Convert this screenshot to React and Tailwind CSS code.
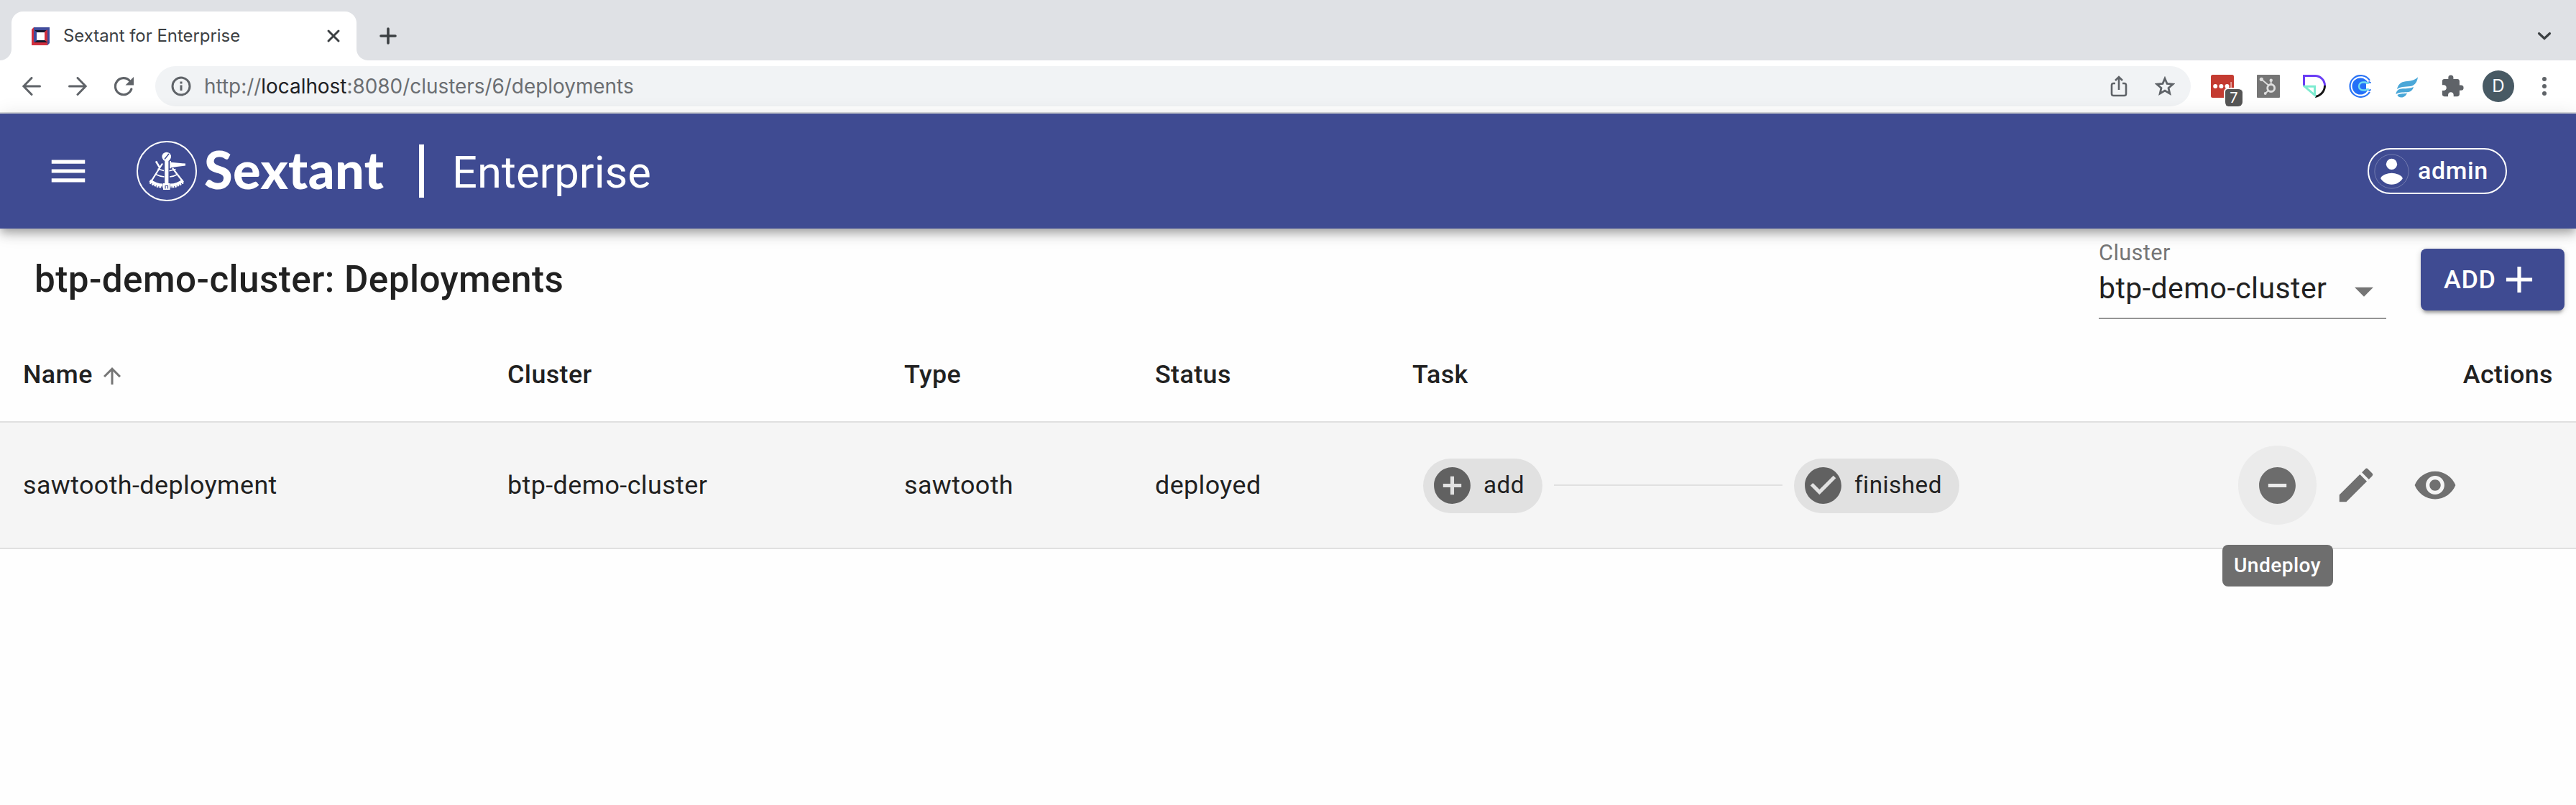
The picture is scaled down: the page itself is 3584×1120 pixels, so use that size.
import {
  MdAdd,
  MdAddCircle,
  MdArrowDropDown,
  MdArrowUpward,
  MdCheckCircle,
  MdEdit,
  MdExtension,
  MdMenu,
  MdRemoveCircle,
  MdVisibility,
} from "react-icons/md";

function Favicon() {
  return (
    <svg className="h-[25px] w-[25px]" viewBox="0 0 25 25">
      <path d="M0 3l3-3v22l-3 3z" fill="#d02f3e" />
      <path d="M3 0h22v22l-3 3V4H3z" fill="#3f4b9b" />
      <path d="M0 25V20h22v5z" fill="#d02f3e" />
      <path d="M4 4h18v17H4z" fill="#10162b" />
      <path d="M3 4l4 2v13l-4 2z" fill="#3f4b9b" />
      <path d="M22 3l-4 3v12l4 3z" fill="#d02f3e" />
      <path d="M7 7h11v11H7z" fill="#fff" />
    </svg>
  );
}

function Tab() {
  return (
    <div className="flex items-end">
      <div className="h-4 w-4 bg-white">
        <div className="h-4 w-4 rounded-br-2xl bg-[#dfe1e5]" />
      </div>
      <div className="flex h-[68px] w-[480px] items-center rounded-t-2xl bg-white pl-7 pr-6">
        <Favicon />
        <span className="ml-[19px] flex-1 whitespace-nowrap text-[23.9px] leading-8 text-[#3c4043]">
          Sextant for Enterprise
        </span>
        <svg className="h-4 w-4 overflow-visible" viewBox="0 0 16 16" fill="none" stroke="#3c4043" strokeWidth="3" strokeLinecap="round">
          <path d="M1 1l14 14M15 1L1 15" />
        </svg>
      </div>
      <div className="h-4 w-4 bg-white">
        <div className="h-4 w-4 rounded-bl-2xl bg-[#dfe1e5]" />
      </div>
    </div>
  );
}

function TabStrip() {
  return (
    <div className="flex h-[84px] items-end bg-[#dfe1e5]">
      <Tab />
      <div className="flex h-[68px] flex-1 items-center justify-between pl-4 pr-[35px]">
        <svg className="h-6 w-6" viewBox="0 0 24 24" fill="none" stroke="#3c4043" strokeWidth="3.6" strokeLinecap="round">
          <path d="M12 2v20M2 12h20" />
        </svg>
        <svg className="h-[12px] w-[18px] overflow-visible" viewBox="0 0 18 12" fill="none" stroke="#3c4043" strokeWidth="3.2" strokeLinecap="round">
          <path d="M1.5 2.5L9 9.500l7.500-7" />
        </svg>
      </div>
    </div>
  );
}

function Cell({ children }) {
  return <div className="flex h-14 w-16 shrink-0 items-center justify-center">{children}</div>;
}

function Toolbar() {
  return (
    <div className="flex h-[74px] items-center border-b-2 border-[#d9dbde] bg-white px-3">
      <Cell>
        <svg className="h-[26px] w-[26px]" viewBox="0 0 26 26" fill="none" stroke="#5f6368" strokeWidth="3" strokeLinecap="round">
          <path d="M24.500 13H2M13 1.500L1.800 13 13 24.500" />
        </svg>
      </Cell>
      <Cell>
        <svg className="h-[26px] w-[26px]" viewBox="0 0 26 26" fill="none" stroke="#5f6368" strokeWidth="3" strokeLinecap="round">
          <path d="M1.500 13H24M13 1.500L24.200 13 13 24.500" />
        </svg>
      </Cell>
      <Cell>
        <svg className="h-[27px] w-[27px]" viewBox="0 0 27 27" fill="none">
          <path d="M21.500 5.500A11.500 11.500 0 1 0 23.800 17" stroke="#5f6368" strokeWidth="3.200" strokeLinecap="round" />
          <path d="M27 0v11.500H15.500z" fill="#5f6368" />
        </svg>
      </Cell>
      <div className="mx-3 flex h-14 flex-1 items-center rounded-full bg-[#f1f3f5] pl-[22px] pr-1">
        <svg className="h-7 w-7" viewBox="0 0 28 28">
          <circle cx="14" cy="14" r="12" fill="none" stroke="#5f6368" strokeWidth="3" />
          <path d="M12.500 7.500h3v3h-3zM12.500 12.500h3V20h-3z" fill="#5f6368" />
        </svg>
        <span className="ml-[18px] flex-1 whitespace-nowrap text-[27.900px] leading-10 text-[#6b6e72]">
          http://<span className="text-[#202124]">localhost</span>:8080/clusters/6/deployments
        </span>
        <Cell>
          <svg className="h-[30px] w-[24px]" viewBox="0 0 24 30" fill="none" stroke="#5f6368" strokeWidth="2.600">
            <path d="M7 11H4.500A2.500 2.500 0 0 0 2 13.500v12A2.500 2.500 0 0 0 4.500 28h15a2.500 2.500 0 0 0 2.500-2.500v-12a2.500 2.500 0 0 0-2.500-2.500H17M12 20V3M7 7l5-5 5 5" />
          </svg>
        </Cell>
        <Cell>
          <svg className="h-7 w-7" viewBox="0 0 28 28" fill="none" stroke="#5f6368" strokeWidth="2.800">
            <path d="M14 3.200l3.100 7.300 7.900.7-6 5.200 1.800 7.800-6.800-4.100-6.800 4.100L9 16.400l-6-5.200 7.900-.7z" />
          </svg>
        </Cell>
      </div>
      <Cell>
        <div className="relative">
          <svg className="h-8 w-8" viewBox="0 0 32 32">
            <rect width="32" height="32" rx="2.500" fill="#c43b31" />
            <circle cx="6.200" cy="16" r="3" fill="#fff" />
            <circle cx="14.400" cy="16" r="3" fill="#fff" />
            <circle cx="22.500" cy="16" r="3" fill="#fff" />
            <path d="M27.500 10h1.200v12h-1.200z" fill="#f3d5d2" />
          </svg>
          <span className="absolute left-[18px] top-[18px] box-content flex h-6 w-6 items-center justify-center rounded-[6px] border-2 border-b-0 border-r-0 border-white bg-[#555] text-[20px] leading-6 text-white">
            7
          </span>
        </div>
      </Cell>
      <Cell>
        <svg className="h-8 w-8" viewBox="0 0 32 32" fill="none" stroke="#dedede">
          <rect width="32" height="32" rx="1" fill="#757575" stroke="none" />
          <circle cx="19.700" cy="18.500" r="5" strokeWidth="2.800" />
          <path d="M6.300 6.300l9.500 8M19.700 8v6M15.800 22l-4 4" strokeWidth="1.800" />
          <g fill="#dedede" stroke="none">
            <circle cx="6.300" cy="6.300" r="2.600" />
            <circle cx="19.700" cy="7.700" r="2.200" />
            <circle cx="11.700" cy="26" r="1.900" />
          </g>
        </svg>
      </Cell>
      <Cell>
        <svg className="h-8 w-8" viewBox="0 0 32 32" fill="none" strokeWidth="3">
          <path d="M1.500 15V1.500H17A13.500 13.500 0 0 1 30.500 15" stroke="#6a3df5" />
          <path d="M30.500 15A15.500 15.500 0 0 1 17 30.500" stroke="#161616" />
          <path d="M2.500 16.300h14v12z" stroke="#7debd0" />
        </svg>
      </Cell>
      <Cell>
        <svg className="h-8 w-8" viewBox="0 0 32 32" fill="none">
          <circle cx="16" cy="16" r="11.500" fill="#2470f8" />
          <path d="M24 12.200h8v7.600h-8z" fill="#fff" />
          <path d="M29 8A14.900 14.900 0 1 0 29 24" stroke="#2b74f5" strokeWidth="2.200" />
          <path d="M27.500 9.500c.8 1.200 1.500 1.500 3.200 1.500M27.500 22.500c.8-1.200 1.500-1.500 3.200-1.500" stroke="#2b74f5" strokeWidth="2" />
          <path d="M28 11.500c-2 .8-3.500.2-5-1h-3.500a5.500 5.500 0 0 0 0 11H23c1.500-1.200 3-1.800 5-1" stroke="#6fdcf0" strokeWidth="2.400" />
        </svg>
      </Cell>
      <Cell>
        <svg className="h-8 w-8" viewBox="0 0 32 32" fill="#4aa7d8">
          <path d="M32 3.300C31 10 28 14 24 15.500c-7 2-14-.5-21 4.500C5 11 11 9.500 17 9c6-.5 11-1.500 15-5.700z" />
          <path d="M26 17c-1 4-3.500 6.500-7 7-6 .8-12-.5-17.500 3C2 21.500 6 19.500 11 19.300c6-.2 10-.3 15-2.300z" />
          <path d="M17 25.500c-1.500 3.500-4 6-8 6-3.500 0-5-1.500-5.500-3.500 4.500-2.500 9-1.200 13.500-2.500z" />
        </svg>
      </Cell>
      <Cell>
        <MdExtension className="h-[34px] w-[34px] text-[#5f6368]" />
      </Cell>
      <Cell>
        <div className="flex h-11 w-11 items-center justify-center rounded-full bg-[#485a64] text-[24px] leading-none text-white">D</div>
      </Cell>
      <Cell>
        <svg className="h-[26px] w-[6px]" viewBox="0 0 6 26" fill="#5f6368">
          <circle cx="3" cy="3" r="3" />
          <circle cx="3" cy="13" r="3" />
          <circle cx="3" cy="23" r="3" />
        </svg>
      </Cell>
    </div>
  );
}

function SextantLogo() {
  return (
    <svg className="h-[84px] w-[84px]" viewBox="0 0 84 84" fill="none" stroke="#fff">
      <circle cx="42" cy="42" r="41" strokeWidth="2" />
      <circle cx="41.700" cy="22" r="6.300" fill="#fff" stroke="none" />
      <path d="M39 25.500l6-7.500" stroke="#3f4b92" strokeWidth="1.500" />
      <path d="M39.200 27h5.200v33h-5.200z" fill="#fff" stroke="none" />
      <path d="M46.300 28.300l1.700-.3v1.800l20 1.800v3L56 36l-8 1.200v1h-1.700z" fill="#fff" stroke="none" />
      <path d="M36 31.500L20.500 56M50 38l14 18" strokeWidth="2.200" />
      <path d="M27 28.300l5 8.500" strokeWidth="2.600" />
      <path d="M29.500 39l8.500 2.500M26.500 46.500q6 3 12 3.500M45.500 41.700l9-2.200M46 50q6-.5 11-3.500" strokeWidth="1.500" />
      <path d="M18.800 55q8 6.500 17.700 6.500M64.700 55q-8 6.500-17.700 6.500" strokeWidth="4" />
      <path d="M18.500 57.500q8 6.500 17.500 6.500M65 57.500q-8 6.500-17.500 6.500" strokeWidth="3" strokeDasharray="2.600 1" />
      <path d="M37 59h9.500v9H37z" fill="#fff" stroke="none" />
      <path d="M40 66.500v-4h3.500v4" stroke="#3f4b92" strokeWidth="1.200" />
    </svg>
  );
}

function AppHeader() {
  return (
    <header className="relative z-10 flex h-40 items-center bg-[#3f4b92] pl-[64px] pr-[96px] text-white shadow-[0_5px_10px_-2px_rgba(0,0,0,0.2),0_10px_13px_0_rgba(0,0,0,0.14),0_3px_26px_0_rgba(0,0,0,0.12)]">
      <MdMenu className="h-[62px] w-[62px]" />
      <div className="ml-[64px] flex items-center">
        <SextantLogo />
        <span className="-mt-1.5 ml-[10px] w-[299px] whitespace-nowrap font-[Lato] text-[72px] font-black leading-[84px] tracking-[0.4px]">
          Sextant
        </span>
        <div className="h-[74px] w-[7px] bg-white" />
        <span className="ml-[39px] mt-1 whitespace-nowrap text-[61.440px] leading-[84px]">Enterprise</span>
      </div>
      <div className="ml-auto flex h-16 w-[194px] items-center rounded-full border-2 border-white">
        <svg className="ml-px h-[61px] w-[61px]" viewBox="0 0 24 24" fill="#fff">
          <circle cx="12" cy="12" r="9.300" fill="none" stroke="#fff" strokeOpacity="0.350" strokeWidth="0.300" />
          <circle cx="12" cy="8" r="3" />
          <path d="M12 19.200c-2.500 0-4.710-1.280-6-3.220.03-1.990 4-3.080 6-3.080 1.990 0 5.970 1.090 6 3.080-1.290 1.940-3.500 3.220-6 3.220z" />
        </svg>
        <span className="-mt-[3px] ml-[6px] text-[34px] font-medium leading-10 tracking-[0.6px]">admin</span>
      </div>
    </header>
  );
}

function PageBar() {
  return (
    <div className="flex h-[138px] items-center pl-12 pr-4 pt-[3px]">
      <h1 className="whitespace-nowrap text-[51.200px] font-medium leading-[64px] tracking-[0.46px]">
        btp-demo-cluster: Deployments
      </h1>
      <div className="ml-auto mr-12 mt-px flex h-[110px] w-[400px] flex-col border-b-2 border-[#949494]">
        <span className="-mt-px text-[30.720px] leading-[38px] tracking-[0.4px] text-[#757575]">Cluster</span>
        <div className="flex h-[60px] items-center justify-between">
          <span className="-mt-px whitespace-nowrap text-[40.960px] leading-[60px] tracking-[0.45px]">btp-demo-cluster</span>
          <MdArrowDropDown className="mt-[8px] h-[62px] w-[62px] text-[#757575]" />
        </div>
      </div>
      <button className="flex h-[86px] w-[200px] items-center rounded-lg bg-[#3f4b92] pl-8 text-white shadow-[0_6px_4px_-3px_rgba(0,0,0,0.3),0_2px_8px_0_rgba(0,0,0,0.18)]">
        <span className="text-[35.840px] font-medium leading-10 tracking-[0.7px]">ADD</span>
        <MdAdd className="ml-px h-[62px] w-[62px]" />
      </button>
    </div>
  );
}

const COLUMNS = "grid grid-cols-[674px_552px_349px_358px_1fr_auto] items-center";

function DeploymentsTable() {
  return (
    <div className="text-[35.840px] leading-[50px] tracking-[0.43px]">
      <div className={COLUMNS + " h-[132px] border-b-2 border-[#e0e0e0] font-medium"}>
        <div className="flex items-center pl-8">
          Name
          <MdArrowUpward className="ml-[9px] mt-1 h-9 w-9 text-[#757575]" />
        </div>
        <div className="pl-8">Cluster</div>
        <div className="pl-8">Type</div>
        <div className="pl-8">Status</div>
        <div className="pl-8">Task</div>
        <div className="pr-8">Actions</div>
      </div>
      <div className={COLUMNS + " h-[176px] border-b-2 border-[#e0e0e0] bg-[#f5f5f5]"}>
        <div className="pl-8">sawtooth-deployment</div>
        <div className="pl-8">btp-demo-cluster</div>
        <div className="pl-8">sawtooth</div>
        <div className="pl-8">deployed</div>
        <div className="flex items-center pl-[47px] pt-[2px] text-[33.280px] tracking-[0.5px]">
          <div className="flex h-[76px] w-[166px] items-center rounded-full bg-[#e1e1e1] pb-[2px] pl-[10px]">
            <MdAddCircle className="mr-[13px] h-[61px] w-[61px] text-[#616161]" />
            add
          </div>
          <div className="mx-4 -mt-[2px] h-[2px] w-[318px] bg-[#e0e0e0]" />
          <div className="flex h-[76px] w-[230px] items-center rounded-full bg-[#e1e1e1] pb-[2px] pl-[10px]">
            <MdCheckCircle className="mr-[13px] h-[61px] w-[61px] text-[#616161]" />
            finished
          </div>
        </div>
        <div className="flex items-center pr-[141px] text-[#707070]">
          <div className="relative flex h-[110px] w-[109px] items-center justify-center rounded-full bg-[#ebebeb]">
            <MdRemoveCircle className="h-[61px] w-[61px] text-[#6c6c6c]" />
            <div className="absolute left-1/2 top-[138px] z-10 flex h-[58px] w-[154px] -translate-x-1/2 items-center justify-center rounded-lg bg-[#6e6e6e] text-[28.160px] font-medium leading-8 text-white">
              Undeploy
            </div>
          </div>
          <div className="flex h-[110px] w-[110px] items-center justify-center">
            <MdEdit className="h-[62px] w-[62px]" />
          </div>
          <div className="flex h-[110px] w-[110px] items-center justify-center">
            <MdVisibility className="h-[62px] w-[62px]" />
          </div>
        </div>
      </div>
    </div>
  );
}

export default function App() {
  return (
    <div className="h-[1120px] w-[3584px] overflow-hidden bg-[#fefefe] text-[#212121]">
      <div className="font-[Inter,sans-serif]">
        <TabStrip />
        <Toolbar />
      </div>
      <div className="font-[Roboto,sans-serif]">
        <AppHeader />
        <PageBar />
        <DeploymentsTable />
      </div>
    </div>
  );
}
